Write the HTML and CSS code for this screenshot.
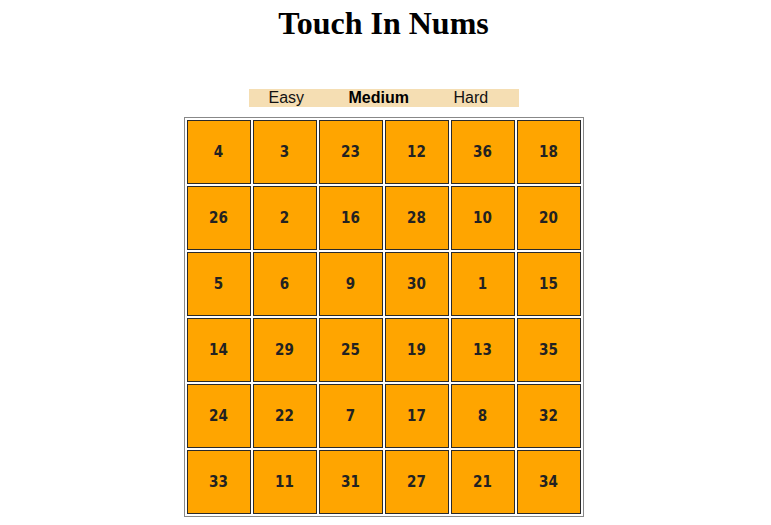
FILE: index.html
```html
<!DOCTYPE html>
<html>
<head>
<meta charset="utf-8">
<link rel="stylesheet" href="styles.css">
</head>
<body>
<div class="page">
  <h1 class="title">Touch In Nums</h1>
  <div class="levels">
    <span class="level">Easy</span>
    <span class="level active">Medium</span>
    <span class="level">Hard</span>
  </div>
  <table class="board">
    <tr><td>4</td><td>3</td><td>23</td><td>12</td><td>36</td><td>18</td></tr>
    <tr><td>26</td><td>2</td><td>16</td><td>28</td><td>10</td><td>20</td></tr>
    <tr><td>5</td><td>6</td><td>9</td><td>30</td><td>1</td><td>15</td></tr>
    <tr><td>14</td><td>29</td><td>25</td><td>19</td><td>13</td><td>35</td></tr>
    <tr><td>24</td><td>22</td><td>7</td><td>17</td><td>8</td><td>32</td></tr>
    <tr><td>33</td><td>11</td><td>31</td><td>27</td><td>21</td><td>34</td></tr>
  </table>
</div>
</body>
</html>
```
FILE: styles.css
```css
html, body {
  margin: 0;
  padding: 0;
  background: #fff;
}
.page {
  width: 767px;
  display: flex;
  flex-direction: column;
  align-items: center;
}
.title {
  font-family: "Liberation Serif", "Times New Roman", serif;
  font-weight: bold;
  font-size: 32px;
  line-height: 37px;
  margin: 5px 0 0 0;
  color: #000;
}
.levels {
  margin-top: 47px;
  width: 270px;
  height: 18px;
  background: #f5deb3;
  font-family: "Liberation Sans", Arial, sans-serif;
  font-size: 16px;
  line-height: 18px;
  color: #111;
  white-space: nowrap;
}
.level {
  padding: 0 20px;
}
.active {
  font-weight: bold;
  color: #000;
}
.board {
  margin-top: 10px;
  border: 1px solid #888;
  border-collapse: separate;
  border-spacing: 2px;
}
.board td {
  width: 62px;
  height: 62px;
  padding: 0;
  box-sizing: content-box;
  border: 1px solid #2a2a2a;
  background: #ffa500;
  text-align: center;
  vertical-align: middle;
  font-family: Impact, "DejaVu Sans Condensed", "DejaVu Sans", sans-serif;
  font-stretch: condensed;
  font-weight: bold;
  font-size: 15px;
  color: #222;
}
```
